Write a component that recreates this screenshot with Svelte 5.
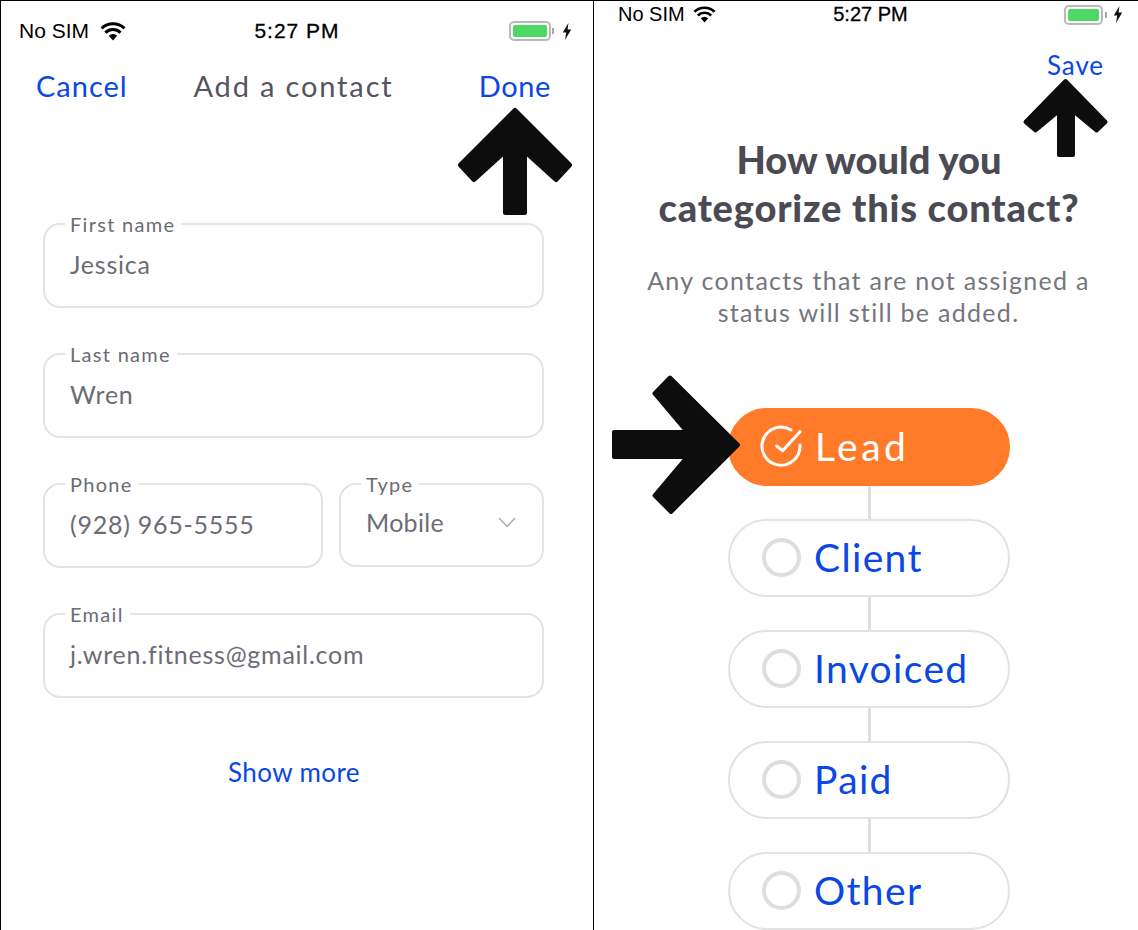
<script>
  const fields = [
    { label: 'First name', value: 'Jessica' },
    { label: 'Last name', value: 'Wren' }
  ];
  const statuses = ['Client', 'Invoiced', 'Paid', 'Other'];
</script>

{#snippet statusbar()}
  <div class="status">
    <div class="carrier">
      <span>No SIM</span>
      <svg viewBox="0 0 26 19" aria-hidden="true">
        <path d="M13 18.5 8.8 13.8a6 6 0 0 1 8.4 0Z" fill="#000" />
        <path d="M5.4 10.6a11 11 0 0 1 15.2 0" fill="none" stroke="#000" stroke-width="3" />
        <path d="M1.6 6.4a16.6 16.6 0 0 1 22.8 0" fill="none" stroke="#000" stroke-width="3" />
      </svg>
    </div>
    <div class="time">5:27 PM</div>
    <div class="power">
      <div class="battery"><div class="charge"></div></div>
      <div class="nub"></div>
      <svg width="10" height="17" viewBox="0 0 10 17" aria-hidden="true">
        <path d="M6.4 0 .8 9.6h3.4L3 17l6.2-10.4H5.6Z" fill="#111" />
      </svg>
    </div>
  </div>
{/snippet}

<div class="screens">
  <section class="panel left">
    {@render statusbar()}
    <header class="nav">
      <span class="link">Cancel</span>
      <span class="title">Add a contact</span>
      <span class="link done">Done</span>
    </header>
    <form class="form">
      {#each fields as f}
        <div class="field">
          <span class="legend">{f.label}</span>
          <span class="value">{f.value}</span>
        </div>
      {/each}
      <div class="pair">
        <div class="field phone">
          <span class="legend">Phone</span>
          <span class="value">(928) 965-5555</span>
        </div>
        <div class="field type">
          <span class="legend">Type</span>
          <span class="value select">
            Mobile
            <svg width="18" height="11" viewBox="0 0 18 11" aria-hidden="true">
              <path d="M1 1l8 8.5L17 1" fill="none" stroke="#a6a6ad" stroke-width="1.4" />
            </svg>
          </span>
        </div>
      </div>
      <div class="field">
        <span class="legend">Email</span>
        <span class="value">j.wren.fitness@gmail.com</span>
      </div>
    </form>
    <div class="more link">Show more</div>

    <svg class="arrow up-a" width="118" height="110" viewBox="0 0 118 110" aria-hidden="true">
      <path d="M59 4.5 113.5 59 100 73.5 68.5 45V106.5H49.5V45L18 73.5 4.5 59Z" fill="#0d0d0d" stroke="#0d0d0d" stroke-width="5" stroke-linejoin="round" />
    </svg>
  </section>

  <section class="panel right">
    {@render statusbar()}
    <div class="save"><span class="link">Save</span></div>
    <h1>How would you<br /><span class="wide">categorize this contact?</span></h1>
    <p>Any contacts that are not assigned a<br />status will still be added.</p>
    <div class="pills">
      <div class="pill active">
        <svg width="42" height="42" viewBox="0 0 42 42" aria-hidden="true">
          <path d="M40 20V21A19 19 0 1 1 31 5" fill="none" stroke="#fff" stroke-width="3" stroke-linecap="round" />
          <path d="M16.7 21 22.7 25.7 40 6.7" fill="none" stroke="#fff" stroke-width="3" stroke-linecap="round" stroke-linejoin="round" />
        </svg>
        <span class="lead">Lead</span>
      </div>
      {#each statuses as s}
        <div class="stem"></div>
        <div class="pill">
          <span class="radio"></span>
          <span>{s}</span>
        </div>
      {/each}
    </div>

    <svg class="arrow up-b" width="90" height="82" viewBox="0 0 90 82" aria-hidden="true">
      <path d="M44.5 4 84.5 45 75.5 53.5 52 34V78H38V34L14.5 53.5 4.5 45Z" fill="#0d0d0d" stroke="#0d0d0d" stroke-width="4" stroke-linejoin="round" />
    </svg>
    <svg class="arrow side" width="132" height="142" viewBox="0 0 132 142" aria-hidden="true">
      <path d="M128 71 60 3.5 44.5 19.5 77 58H4V83H77L44.5 121.5 61 138Z" fill="#0d0d0d" stroke="#0d0d0d" stroke-width="4" stroke-linejoin="round" />
    </svg>
  </section>
</div>

<style>
  :global(body) {
    margin: 0;
    background: #fff;
  }
  .screens {
    display: flex;
    width: 1138px;
    height: 930px;
    overflow: hidden;
    box-sizing: border-box;
    font-family: "Lato", "Liberation Sans", sans-serif;
    color: #4b4b55;
  }
  .panel {
    position: relative;
    box-sizing: border-box;
    border-top: 1px solid #000;
    height: 930px;
  }
  .left {
    width: 594px;
    border-left: 1px solid #000;
    border-right: 1px solid #000;
    padding-top: 18px;
  }
  .right {
    width: 544px;
    padding-top: 2px;
  }
  .status {
    display: grid;
    grid-template-columns: 1fr auto 1fr;
    align-items: center;
    height: 21px;
    padding: 0 21px 0 18px;
    font-family: "Liberation Sans", sans-serif;
    font-size: 21px;
    color: #000;
  }
  .right .status {
    padding: 0 15px 0 24px;
    font-size: 20px;
  }
  .carrier {
    display: flex;
    align-items: center;
    gap: 11px;
  }
  .carrier svg {
    width: 26px;
    height: 19px;
  }
  .right .carrier {
    gap: 8px;
  }
  .right .carrier svg {
    width: 23px;
    height: 17px;
  }
  .time {
    letter-spacing: 1px;
    -webkit-text-stroke: 0.3px #000;
    margin-left: 3px;
  }
  .right .time {
    letter-spacing: 0;
    margin-left: 0;
  }
  .power {
    display: flex;
    align-items: center;
    justify-content: flex-end;
    gap: 4px;
  }
  .left .power {
    gap: 3px;
  }
  .battery {
    box-sizing: border-box;
    width: 42px;
    height: 20px;
    border: 2px solid #b9b9b9;
    border-radius: 5px;
    padding: 2px;
  }
  .right .battery {
    width: 39px;
  }
  .charge {
    height: 100%;
    background: #4cd964;
    border-radius: 2px;
  }
  .nub {
    width: 2px;
    height: 6px;
    background: #a9a9a9;
    margin-left: -2px;
    margin-right: 2px;
  }
  .left .nub {
    margin-right: 5px;
  }
  .link {
    color: #0b47e4;
  }
  .nav {
    display: grid;
    grid-template-columns: 1fr auto 1fr;
    align-items: center;
    padding: 0 42px 0 35px;
    margin-top: 25px;
    height: 40px;
    font-size: 29px;
    letter-spacing: 1px;
  }
  .done {
    justify-self: end;
    letter-spacing: 0.6px;
  }
  .title {
    color: #55555e;
    letter-spacing: 1.85px;
  }
  .form {
    display: flex;
    flex-direction: column;
    gap: 45px;
    margin: 118px 49px 0 42px;
  }
  .field {
    position: relative;
    box-sizing: border-box;
    height: 85px;
    border: 2px solid #e4e4e6;
    border-radius: 17px;
    padding: 23px 25px 0;
  }
  .legend {
    position: absolute;
    left: 20px;
    top: -14px;
    padding: 0 6px 0 5px;
    background: #fff;
    font-size: 20px;
    line-height: 26px;
    letter-spacing: 1.3px;
    color: #6c6c75;
  }
  .value {
    display: block;
    font-size: 25px;
    line-height: 32px;
    letter-spacing: 0.75px;
    color: #6c6c75;
  }
  .pair {
    display: flex;
    align-items: flex-start;
    gap: 16px;
  }
  .phone {
    width: 280px;
  }
  .type {
    flex: 1;
    height: 84px;
  }
  .select {
    display: flex;
    justify-content: space-between;
    align-items: center;
    padding-right: 1px;
    margin-top: -2px;
    letter-spacing: 0.3px;
  }
  .more {
    margin: 58px 0 0;
    padding-right: 6px;
    text-align: center;
    font-size: 26px;
    line-height: 32px;
    letter-spacing: 0.4px;
  }
  .save {
    display: flex;
    justify-content: flex-end;
    padding-right: 34px;
    margin-top: 25px;
    font-size: 26px;
    line-height: 32px;
    letter-spacing: 0.9px;
  }
  h1 {
    margin: 54px 0 0;
    padding-left: 6px;
    text-align: center;
    font-size: 38px;
    line-height: 48px;
    font-weight: 900;
    color: #4b4b55;
  }
  .wide {
    letter-spacing: 0.8px;
  }
  p {
    margin: 33px 0 0;
    padding-left: 5px;
    text-align: center;
    font-size: 25px;
    line-height: 32px;
    letter-spacing: 1.3px;
    color: #75757d;
  }
  .pills {
    display: flex;
    flex-direction: column;
    align-items: center;
    width: 282px;
    margin: 80px 0 0 134px;
  }
  .pill {
    flex: none;
    display: flex;
    align-items: center;
    box-sizing: border-box;
    width: 282px;
    height: 78px;
    border: 2px solid #e2e2e2;
    border-radius: 39px;
    padding: 0 0 2px 32px;
    gap: 13px;
    font-size: 39px;
    letter-spacing: 1.35px;
    color: #0b47e4;
  }
  .pill.active {
    background: #ff7b2a;
    border-color: #ff7b2a;
    color: #fff;
    padding-left: 30px;
    gap: 13px;
  }
  .lead {
    letter-spacing: 3.5px;
  }
  .radio {
    flex: none;
    box-sizing: border-box;
    width: 39px;
    height: 39px;
    border: 4px solid #dedede;
    border-radius: 50%;
  }
  .stem {
    flex: none;
    width: 3px;
    height: 33px;
    background: #dedede;
  }
  .arrow {
    position: absolute;
    pointer-events: none;
  }
  .up-a {
    left: 455px;
    top: 105px;
  }
  .up-b {
    left: 427px;
    top: 76px;
  }
  .side {
    left: 16px;
    top: 373px;
  }
</style>
